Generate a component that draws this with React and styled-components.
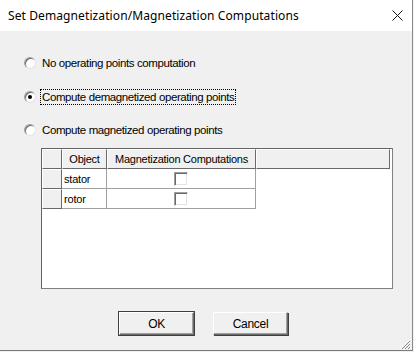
import React from "react";
import styled, { createGlobalStyle } from "styled-components";

const Global = createGlobalStyle`
  html, body {
    margin: 0;
    padding: 0;
    background: #f0f0f0;
  }
`;

const Window = styled.div`
  width: 413px;
  height: 351px;
  display: flex;
  flex-direction: column;
  border-right: 1px solid #8a8a8a;
  border-bottom: 1px solid #7a7a7a;
  box-sizing: border-box;
  background: #f0f0f0;
  font-family: "Liberation Sans", Arial, sans-serif;
  font-size: 11px;
  color: #000;
`;

const TitleBar = styled.div`
  height: 31px;
  flex: none;
  background: #fff;
  display: flex;
  align-items: center;
  justify-content: space-between;
  padding: 0 9px 0 8px;
  box-sizing: border-box;
`;

const Title = styled.span`
  font-family: "Noto Sans", "Open Sans", sans-serif;
  font-size: 12px;
  letter-spacing: 0.1px;
  padding-bottom: 1px;
`;

const Body = styled.div`
  flex: 1;
  display: flex;
  flex-direction: column;
  padding: 24px 0 0 24px;
  position: relative;
`;

const RadioRow = styled.label`
  display: flex;
  align-items: center;
  height: 16px;
  margin-bottom: ${(p) => p.gap}px;
`;

const RadioDot = styled.span`
  width: 12px;
  height: 12px;
  border-radius: 50%;
  box-sizing: border-box;
  background: #fff;
  border: 1px solid;
  border-color: #a0a0a0 #e3e3e3 #e3e3e3 #a0a0a0;
  box-shadow: inset 1px 1px 0 #696969;
  display: flex;
  align-items: center;
  justify-content: center;
  flex: none;
  &::after {
    content: "";
    width: 4px;
    height: 4px;
    border-radius: 50%;
    background: ${(p) => (p.checked ? "#000" : "transparent")};
  }
`;

const RadioText = styled.span`
  margin-left: 4px;
  padding: 1px 1px;
  border: 1px dotted ${(p) => (p.focused ? "#000" : "transparent")};
  font-size: 11.5px;
  letter-spacing: -0.4px;
  line-height: 12px;
`;

const GridBox = styled.div`
  margin: 10px 0 0 17px;
  width: 352px;
  height: 141px;
  box-sizing: border-box;
  background: #fff;
  border: 1px solid #646464;
  border-right-color: #808080;
  border-bottom-color: #808080;
`;

const Row = styled.div`
  display: flex;
  height: 20px;
`;

const HeadCell = styled.div`
  width: ${(p) => `${p.w}px`};
  flex: none;
  box-sizing: border-box;
  background: #f0f0f0;
  border: 1px solid;
  border-color: #fff #696969 #696969 #fff;
  display: flex;
  align-items: center;
  justify-content: center;
  font-size: 11px;
  letter-spacing: -0.25px;
`;

const Cell = styled.div`
  width: ${(p) => p.w}px;
  flex: none;
  box-sizing: border-box;
  border-right: 1px solid #a0a0a0;
  border-bottom: 1px solid #a0a0a0;
  display: flex;
  align-items: center;
  justify-content: ${(p) => (p.center ? "center" : "flex-start")};
  padding-left: ${(p) => (p.center ? 0 : 2)}px;
  font-size: 11px;
  letter-spacing: -0.2px;
`;

const CheckBox = styled.span`
  width: 14px;
  height: 14px;
  box-sizing: border-box;
  background: #fff;
  border: 1px solid;
  border-color: #a0a0a0 #fff #fff #a0a0a0;
  box-shadow: inset 1px 1px 0 #696969, inset -1px -1px 0 #e3e3e3;
  margin-left: -1px;
`;

const Buttons = styled.div`
  display: flex;
  gap: 19px;
  margin: 23px 0 0 95px;
`;

const Button = styled.button`
  width: 75px;
  height: 23px;
  box-sizing: border-box;
  background: #f0f0f0;
  border: 1px solid;
  border-color: #fff #696969 #696969 #fff;
  box-shadow: ${(p) =>
    p.primary
      ? "0 0 0 1px #404040, inset -1px -1px 0 #a0a0a0"
      : "inset -1px -1px 0 #a0a0a0, 1px 1px 0 #404040"};
  font-family: "Liberation Sans", Arial, sans-serif;
  font-size: 12px;
  letter-spacing: -0.3px;
  color: #000;
  padding: 0;
`;

const Grip = styled.svg`
  position: absolute;
  right: 1px;
  bottom: 0;
`;

const rows = ["stator", "rotor"];

export default function App() {
  return (
    <>
      <Global />
      <Window>
        <TitleBar>
          <Title>Set Demagnetization/Magnetization Computations</Title>
          <svg width="11" height="11" viewBox="0 0 11 11">
            <path d="M0.5 0.5 L10.5 10.5 M10.5 0.5 L0.5 10.5" stroke="#111" strokeWidth="1" />
          </svg>
        </TitleBar>
        <Body>
          <RadioRow gap={18}>
            <RadioDot />
            <RadioText>No operating points computation</RadioText>
          </RadioRow>
          <RadioRow gap={17}>
            <RadioDot checked />
            <RadioText focused>Compute demagnetized operating points</RadioText>
          </RadioRow>
          <RadioRow gap={0}>
            <RadioDot />
            <RadioText>Compute magnetized operating points</RadioText>
          </RadioRow>
          <GridBox>
            <Row>
              <HeadCell w={20} />
              <HeadCell w={45}>Object</HeadCell>
              <HeadCell w={149}>Magnetization Computations</HeadCell>
              <HeadCell w={134} />
            </Row>
            {rows.map((r) => (
              <Row key={r}>
                <HeadCell w={20} />
                <Cell w={45}>{r}</Cell>
                <Cell w={149} center>
                  <CheckBox />
                </Cell>
              </Row>
            ))}
          </GridBox>
          <Buttons>
            <Button primary>OK</Button>
            <Button>Cancel</Button>
          </Buttons>
          <Grip width="10" height="10" viewBox="0 0 10 10">
            <path d="M9 1 L1 9 M9 4 L4 9 M9 7 L7 9" stroke="#8a8a8a" strokeWidth="1" />
          </Grip>
        </Body>
      </Window>
    </>
  );
}
